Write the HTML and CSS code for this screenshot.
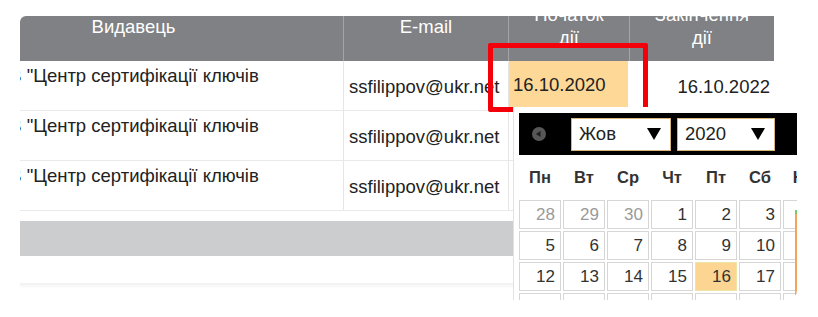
FILE: index.html
```html
<!doctype html>
<html lang='uk'>
<head>
<meta charset='UTF-8'>
<title>Сертифікати</title>
<link rel="stylesheet" href="styles.css">
</head>
<body>
<div class='screen'>
  <div class='scroller'>
    <div class='sheet'>
      <div class='head'>
        <div class='th c1'>Видавець</div>
        <div class='th c2'>E-mail</div>
        <div class='th c3'>Початок<br>дії</div>
        <div class='th c4'>Закінчення<br>дії</div>
      </div>
      <div class='row'>
        <div class='td c1 issuer'>АЦСК ТОВ "Центр сертифікації ключів</div>
        <div class='td c2'>ssfilippov@ukr.net</div>
        <div class='td c3'><span class='inp'>16.10.2020</span></div>
        <div class='td c4 end'>16.10.2022</div>
        <div class='td'></div>
      </div>
      <div class='row'>
        <div class='td c1 issuer'>АЦСК ТОВ "Центр сертифікації ключів</div>
        <div class='td c2'>ssfilippov@ukr.net</div>
        <div class='td c3'></div>
        <div class='td c4 end'></div>
        <div class='td'></div>
      </div>
      <div class='row'>
        <div class='td c1 issuer'>АЦСК ТОВ "Центр сертифікації ключів</div>
        <div class='td c2'>ssfilippov@ukr.net</div>
        <div class='td c3'></div>
        <div class='td c4 end'></div>
        <div class='td'></div>
      </div>
      <div class='pager'></div>
      <div class='tail'></div>
    </div>
  </div>

  <div class='mark'></div>

  <div class='cal'>
    <div class='cal-head'>
      <svg class='prev' width='14' height='14' viewBox='0 0 14 14'>
        <circle cx='7' cy='7' r='7' fill='#575757'/>
        <polygon points='4,7 8.5,4 8.5,10' fill='#1e1e1e'/>
      </svg>
      <div class='sel month'>Жов<svg width='14' height='12' viewBox='0 0 14 12'><polygon points='0,0 14,0 7,12' fill='#000'/></svg></div>
      <div class='sel year'>2020<svg width='14' height='12' viewBox='0 0 14 12'><polygon points='0,0 14,0 7,12' fill='#000'/></svg></div>
    </div>
    <div class='week'>
      <span>Пн</span><span>Вт</span><span>Ср</span><span>Чт</span><span>Пт</span><span>Сб</span><span>Нд</span>
    </div>
    <div class='days'>
      <span class='other'>28</span><span class='other'>29</span><span class='other'>30</span><span>1</span><span>2</span><span>3</span><span>4</span>
      <span>5</span><span>6</span><span>7</span><span>8</span><span>9</span><span>10</span><span>11</span>
      <span>12</span><span>13</span><span>14</span><span>15</span><span class='today'>16</span><span>17</span><span>18</span>
      <span>19</span><span>20</span><span>21</span><span>22</span><span>23</span><span>24</span><span>25</span>
    </div>
  </div>

  <div class='edge'></div>
</div>
</body>
</html>
```
FILE: styles.css
```css
body {
  margin: 0;
  background: #fff;
  font-family: "Liberation Sans", Arial, sans-serif;
  color: #222;
}
.screen {
  position: relative;
  width: 797px;
  height: 300px;
  overflow: hidden;
  border-bottom-right-radius: 10px;
}
.scroller {
  margin: 16px 0 0 20px;
  height: 276px;
  overflow: hidden;
  border-top-left-radius: 6px;
}
.sheet {
  width: 880px;
  margin: -25px 0 0 -96px;
  font-size: 18.5px;
}
.head {
  display: grid;
  grid-template-columns: 420px 165px 121px 144px;
  width: 850px;
  height: 70px;
  background: #808184;
  color: #fff;
}
.th {
  display: flex;
  align-items: center;
  justify-content: center;
  text-align: center;
  line-height: 23px;
  border-right: 1px solid #a3a4a7;
}
.th.c4 {
  border-right: 0;
}
.row {
  display: grid;
  grid-template-columns: 420px 165px 121px 144px 30px;
  height: 49px;
  border-bottom: 1px solid #e9e9e9;
}
.td {
  display: flex;
  align-items: center;
  white-space: nowrap;
  overflow: hidden;
}
.td.c1, .td.c2 {
  border-right: 1px solid #e6e6e6;
}
.issuer {
  align-items: flex-start;
  padding: 3px 0 0 5px;
  line-height: 23px;
}
.td.c2 {
  padding-left: 5px;
  padding-top: 2px;
}
.td.c3 {
  padding-left: 4px;
}
.inp {
  display: flex;
  align-items: center;
  align-self: flex-start;
  height: 46px;
  width: 119px;
  margin-left: -4px;
  padding: 2px 0 0 4px;
  box-sizing: border-box;
  background: #fdd896;
}
.end {
  justify-content: flex-end;
  padding-right: 4px;
  padding-top: 2px;
}
.pager {
  margin-top: 10px;
  height: 35px;
  background: #cbcdcf;
}
.tail {
  height: 27px;
  box-shadow: 0 3px 4px rgba(0, 0, 0, 0.06);
}
.mark {
  position: absolute;
  left: 488px;
  top: 43px;
  width: 160px;
  height: 69px;
  box-sizing: border-box;
  border: 5px solid #f4000a;
  border-radius: 2px;
}
.cal {
  position: absolute;
  left: 513px;
  top: 107px;
  width: 320px;
  height: 220px;
  padding: 6px 0 0 5px;
  box-sizing: border-box;
  background: #fff;
  border-left: 1px solid #e2e2e2;
}
.cal-head {
  display: flex;
  align-items: center;
  height: 42px;
  padding-left: 13px;
  background: #000;
}
.prev {
  display: block;
}
.sel {
  display: flex;
  align-items: center;
  justify-content: space-between;
  height: 33px;
  box-sizing: border-box;
  padding: 0 9px 0 7px;
  background: #fff;
  border: 1px solid #d8b57a;
  font-size: 18.5px;
  color: #222;
}
.month {
  width: 100px;
  margin-left: 25px;
}
.year {
  width: 98px;
  margin-left: 6px;
}
.week {
  display: grid;
  grid-template-columns: repeat(7, 42px);
  column-gap: 2px;
  height: 45px;
  align-items: center;
  justify-items: center;
  font-size: 16.5px;
  font-weight: bold;
  color: #333;
}
.days {
  display: grid;
  grid-template-columns: repeat(7, 42px);
  grid-auto-rows: 29px;
  gap: 2px;
}
.days span {
  display: flex;
  align-items: center;
  justify-content: flex-end;
  padding-right: 5px;
  border: 1px solid #d6d6d6;
  font-size: 17px;
  color: #333;
}
.days .other {
  color: #9a9a9a;
}
.days .today {
  background: #fcd592;
  border-color: #ece6a6;
}
.edge {
  position: absolute;
  left: 795px;
  top: 210px;
  width: 2px;
  height: 88px;
  background: #f2a35c;
  border-top: 4px solid #6ccf6c;
}
```
